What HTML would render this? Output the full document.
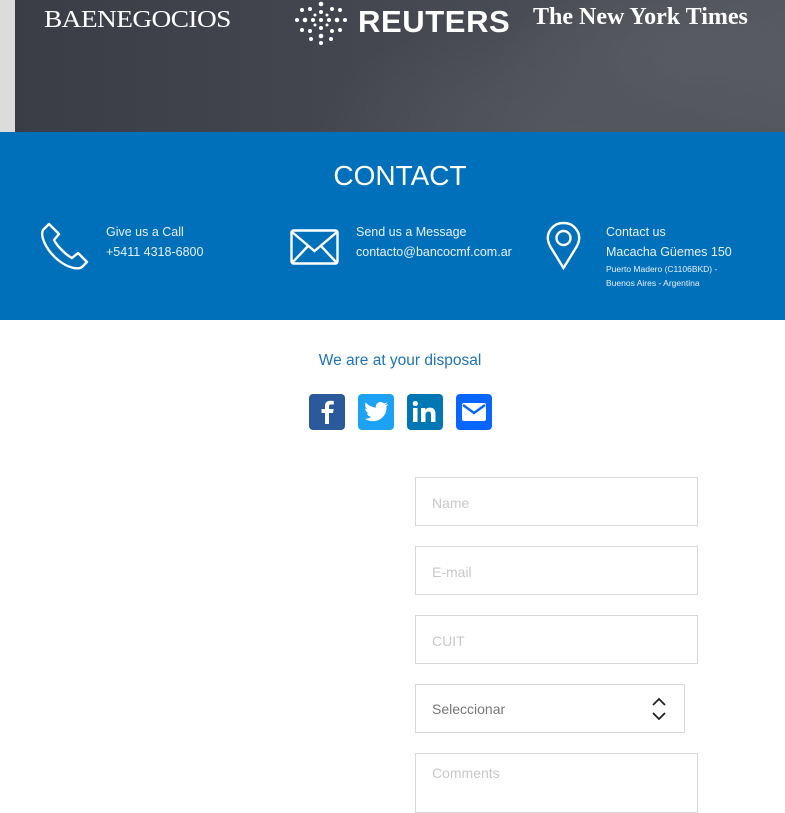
<!DOCTYPE html>
<html><head><meta charset="utf-8"><style>
*{margin:0;padding:0;box-sizing:border-box}
body{width:785px;height:800px;overflow:hidden;background:#fff;font-family:"Liberation Sans",sans-serif;position:relative}
.ban{position:absolute;left:0;top:0;width:785px;height:132px;background:#dcdcdc}
.ban2{position:absolute;left:15px;top:0;width:770px;height:132px;background:radial-gradient(ellipse 260px 120px at 560px 130px,#55575f 0%,rgba(85,87,95,0) 100%),radial-gradient(ellipse 200px 90px at 680px 60px,#5a5c63,rgba(0,0,0,0)),linear-gradient(90deg,#3b3d46,#474a53 60%,#55575e)}
.t{position:absolute;color:#fff;white-space:nowrap}
.blue{position:absolute;left:0;top:132px;width:785px;height:188px;background:#0070ba}
.sm{font-size:12.5px;line-height:20px;color:#e6f0f8}
.xs{font-size:8.5px;line-height:14px;color:#e6f0f8}
.in{position:absolute;left:415px;width:283px;height:49px;border:1px solid #d8d8d8;font-size:14px;color:#c8c8c8;padding:17px 16px}
</style></head><body>
<div class="ban"></div><div class="ban2"></div>
<div class="t" style="left:44px;top:7px;font-family:'Liberation Serif',serif;font-size:24px;letter-spacing:-0.5px;transform:scaleX(1.14);transform-origin:0 0">BAENEGOCIOS</div>
<svg style="position:absolute;left:293px;top:-6px" width="56" height="52" viewBox="0 0 56 52">
<g fill="#fff">
<circle cx="28" cy="26" r="2"/><circle cx="20" cy="26" r="2"/><circle cx="36" cy="26" r="2"/><circle cx="28" cy="18" r="2"/><circle cx="28" cy="34" r="2"/>
<circle cx="12" cy="26" r="2.3"/><circle cx="44" cy="26" r="2.3"/><circle cx="28" cy="10" r="2.3"/><circle cx="28" cy="42" r="2.3"/>
<circle cx="17" cy="15" r="2"/><circle cx="39" cy="15" r="2"/><circle cx="17" cy="37" r="2"/><circle cx="39" cy="37" r="2"/>
<circle cx="4" cy="26" r="2"/><circle cx="52" cy="26" r="2"/><circle cx="28" cy="49" r="2"/>
<circle cx="9" cy="36" r="2"/><circle cx="47" cy="36" r="2"/><circle cx="9" cy="16" r="2"/><circle cx="47" cy="16" r="2"/>
<circle cx="18" cy="45" r="2"/><circle cx="38" cy="45" r="2"/><circle cx="22" cy="31" r="1.5"/><circle cx="34" cy="31" r="1.5"/><circle cx="22" cy="21" r="1.5"/><circle cx="34" cy="21" r="1.5"/>
</g></svg>
<div class="t" style="left:358px;top:4px;font-size:31px;font-weight:bold;letter-spacing:0.6px">REUTERS</div>
<div class="t" style="left:533px;top:4px;font-family:'Liberation Serif',serif;font-size:24px;font-weight:bold">The New York Times</div>

<div class="blue"></div>
<div class="t" style="left:0;width:800px;text-align:center;top:160px;font-size:28px">CONTACT</div>
<svg style="position:absolute;left:40px;top:222px" width="49" height="49" viewBox="0 0 49 49" fill="none" stroke="#fff" stroke-width="2.4" stroke-linejoin="round"><path d="M9 2 L3 8 C0 14 6 28 18 38 C28 46 38 48 42 45 L47 40 L38 31 L32 36 C26 33 17 24 14 18 L19 12 Z"/></svg>
<div class="t sm" style="left:106px;top:222px">Give us a Call<br>+5411 4318-6800</div>
<svg style="position:absolute;left:290px;top:229px" width="49" height="36" viewBox="0 0 49 36" fill="none" stroke="#fff" stroke-width="2.4"><rect x="1.5" y="1.5" width="46" height="33" rx="2"/><path d="M2 3 L24.5 22 L47 3 M2 34 L18 17 M47 34 L31 17"/></svg>
<div class="t sm" style="left:356px;top:222px">Send us a Message<br>contacto@bancocmf.com.ar</div>
<svg style="position:absolute;left:546px;top:221px" width="35" height="50" viewBox="0 0 35 50" fill="none" stroke="#fff" stroke-width="2.4"><path d="M17.5 47 L4 25 C1 19 1 13 5 8 C9 3 13 2 17.5 2 C22 2 26 3 30 8 C34 13 34 19 31 25 Z"/><circle cx="17.5" cy="17" r="7"/></svg>
<div class="t sm" style="left:606px;top:222px">Contact us<br>Macacha Güemes 150</div>
<div class="t xs" style="left:606px;top:262px">Puerto Madero (C1106BKD) -<br>Buenos Aires - Argentina</div>

<div style="position:absolute;left:0;width:800px;text-align:center;top:352px;font-size:15.5px;color:#1d74b8">We are at your disposal</div>
<svg style="position:absolute;left:309px;top:394px" width="184" height="37" viewBox="0 0 184 37">
<rect x="0" y="0" width="36" height="36" rx="4" fill="#2a5a9b"/><path d="M20 30 V19 H24 L24.6 15 H20 V12.5 C20 11 20.7 10.5 22 10.5 H24.8 V7 C24 6.8 22.7 6.7 21.4 6.7 C18 6.7 16 8.5 16 12 V15 H12.5 V19 H16 V30 Z" fill="#fff"/>
<rect x="49" y="0" width="36" height="36" rx="4" fill="#1da1f2"/><path d="M79 10 C78 10.5 77 10.8 76 11 C77 10.3 77.8 9.4 78.2 8.3 C77.2 8.9 76 9.3 74.9 9.5 C72.9 7.3 69.3 7.5 67.6 10 C66.9 11.1 66.7 12.4 67 13.6 C63 13.4 59.3 11.5 56.8 8.4 C55.5 10.7 56.2 13.6 58.4 15 C57.6 15 56.8 14.8 56.2 14.4 C56.2 16.8 57.9 18.8 60.1 19.3 C59.4 19.5 58.6 19.5 57.9 19.4 C58.5 21.4 60.4 22.8 62.5 22.8 C60.5 24.4 58 25.1 55.5 24.8 C65.5 31 78.5 24.5 77.5 12.3 C78.2 11.6 78.8 10.9 79 10 Z" fill="#fff"/>
<rect x="98" y="0" width="36" height="36" rx="4" fill="#0077b5"/><rect x="104" y="14" width="4.5" height="14" fill="#fff"/><circle cx="106.3" cy="9.5" r="2.6" fill="#fff"/><path d="M112 14 H116.3 V16 C117.3 14.2 119 13.6 121 13.6 C125 13.6 126.5 16 126.5 20 V28 H122 V21 C122 19 121.6 17.5 119.6 17.5 C117.5 17.5 116.5 19 116.5 21 V28 H112 Z" fill="#fff"/>
<rect x="147" y="0" width="36" height="36" rx="4" fill="#0866ff"/><rect x="153" y="9" width="24" height="18" rx="2" fill="#fff"/><path d="M154 11 L165 19 L176 11" fill="none" stroke="#0866ff" stroke-width="2.4"/>
</svg>

<div class="in" style="top:477px">Name</div>
<div class="in" style="top:546px">E-mail</div>
<div class="in" style="top:615px">CUIT</div>
<div class="in" style="top:684px;width:270px;color:#777;padding-top:16px">Seleccionar</div>
<svg style="position:absolute;left:651px;top:696px" width="16" height="26" viewBox="0 0 16 26" fill="none" stroke="#222" stroke-width="1.8"><path d="M2 9 L8 3 L14 9 M2 17 L8 23 L14 17"/></svg>
<div class="in" style="top:753px;height:60px;padding-top:11px">Comments</div>
</body></html>
